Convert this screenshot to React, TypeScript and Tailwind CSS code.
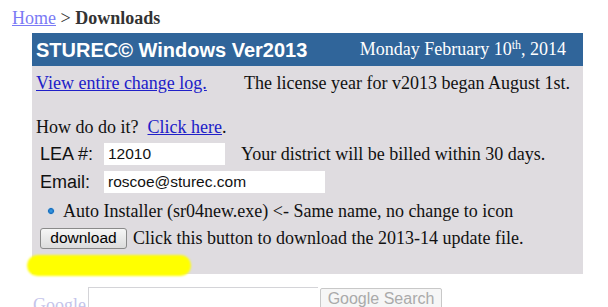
export default function App() {
  const serif = { fontFamily: '"Liberation Serif", "Times New Roman", serif' };
  const sans = { fontFamily: '"Liberation Sans", Arial, sans-serif' };
  return (
    <div className="relative w-[608px] h-[307px] bg-white overflow-hidden" style={serif}>
      <div className="h-[33px] pl-[12px] pt-[7px] text-[18px] leading-[22px] text-[#333]">
        <span className="text-[#7a7af5] underline">Home</span>
        <span> &gt; </span>
        <span className="font-bold">Downloads</span>
      </div>
      <div className="ml-[32px] w-[551px]">
        <div className="h-[33px] bg-[#30659a] flex items-center justify-between pl-[4px] pr-[17px] text-white">
          <span className="text-[20px] font-bold" style={sans}>STUREC© Windows Ver2013</span>
          <span className="text-[18px]">
            Monday February 10<sup className="text-[12px]">th</sup>, 2014
          </span>
        </div>
        <div className="h-[208px] bg-[#dfdce0] pl-[4px] text-[18px] text-[#111]">
          <div className="flex items-center h-[33px] pt-[1px]">
            <span className="w-[208px] text-[#2020c8] underline">View entire change log.</span>
            <span>The license year for v2013 began August 1st.</span>
          </div>
          <div className="h-[17px]" />
          <div className="flex items-center h-[22px]">
            How do do it?&nbsp;&nbsp;<span className="text-[#2020c8] underline">Click here</span>.
          </div>
          <div className="flex items-center h-[28px] mt-[2px] pl-[4px]">
            <span className="w-[64px] text-[18px]" style={sans}>LEA #:</span>
            <div className="w-[121px] h-[22px] bg-white flex items-center px-[4px] text-[15.5px]" style={sans}>12010</div>
            <span className="ml-[16px]">Your district will be billed within 30 days.</span>
          </div>
          <div className="flex items-center h-[28px] pl-[4px]">
            <span className="w-[64px] text-[18px]" style={sans}>Email:</span>
            <div className="w-[221px] h-[22px] bg-white flex items-center px-[4px] text-[15.5px]" style={sans}>roscoe@sturec.com</div>
          </div>
          <div className="flex items-center h-[22px] mt-[4px] pl-[11px]">
            <span className="w-[8px] h-[8px] rounded-full bg-[radial-gradient(circle,#3aa0e8_0,#1a6fc0_45%,#c8d4e0_60%,#eef0f2_100%)] mr-[8px]" />
            <span>Auto Installer (sr04new.exe) &lt;- Same name, no change to icon</span>
          </div>
          <div className="flex items-center h-[28px] mt-[2px] pl-[4px]">
            <div className="w-[87px] h-[21px] rounded-[3px] border border-[#8a8a8a] bg-gradient-to-b from-[#f6f6f6] to-[#dcdcdc] flex items-center justify-center text-[15.5px] text-black" style={sans}>download</div>
            <span className="ml-[6px]">Click this button to download the 2013-14 update file.</span>
          </div>
        </div>
      </div>
      <div className="absolute left-[27px] top-[255px] w-[164px] h-[21px] rounded-full bg-[#ffff00] blur-[1px]" />
      <div className="flex items-start mt-[13px] pl-[33px]">
        <span className="text-[18px] text-[#c4c4ea] w-[55px] pt-[5px]">Google</span>
        <div className="w-[230px] h-[24px] border border-[#d4d4d8] border-r-0 bg-white" />
        <div className="ml-[2px] w-[122px] h-[22px] mt-[1px] rounded-[2px] border border-[#c8c8c8] bg-[#f6f6f6] flex items-center justify-center text-[16px] text-[#aaa]" style={sans}>Google Search</div>
      </div>
    </div>
  );
}
